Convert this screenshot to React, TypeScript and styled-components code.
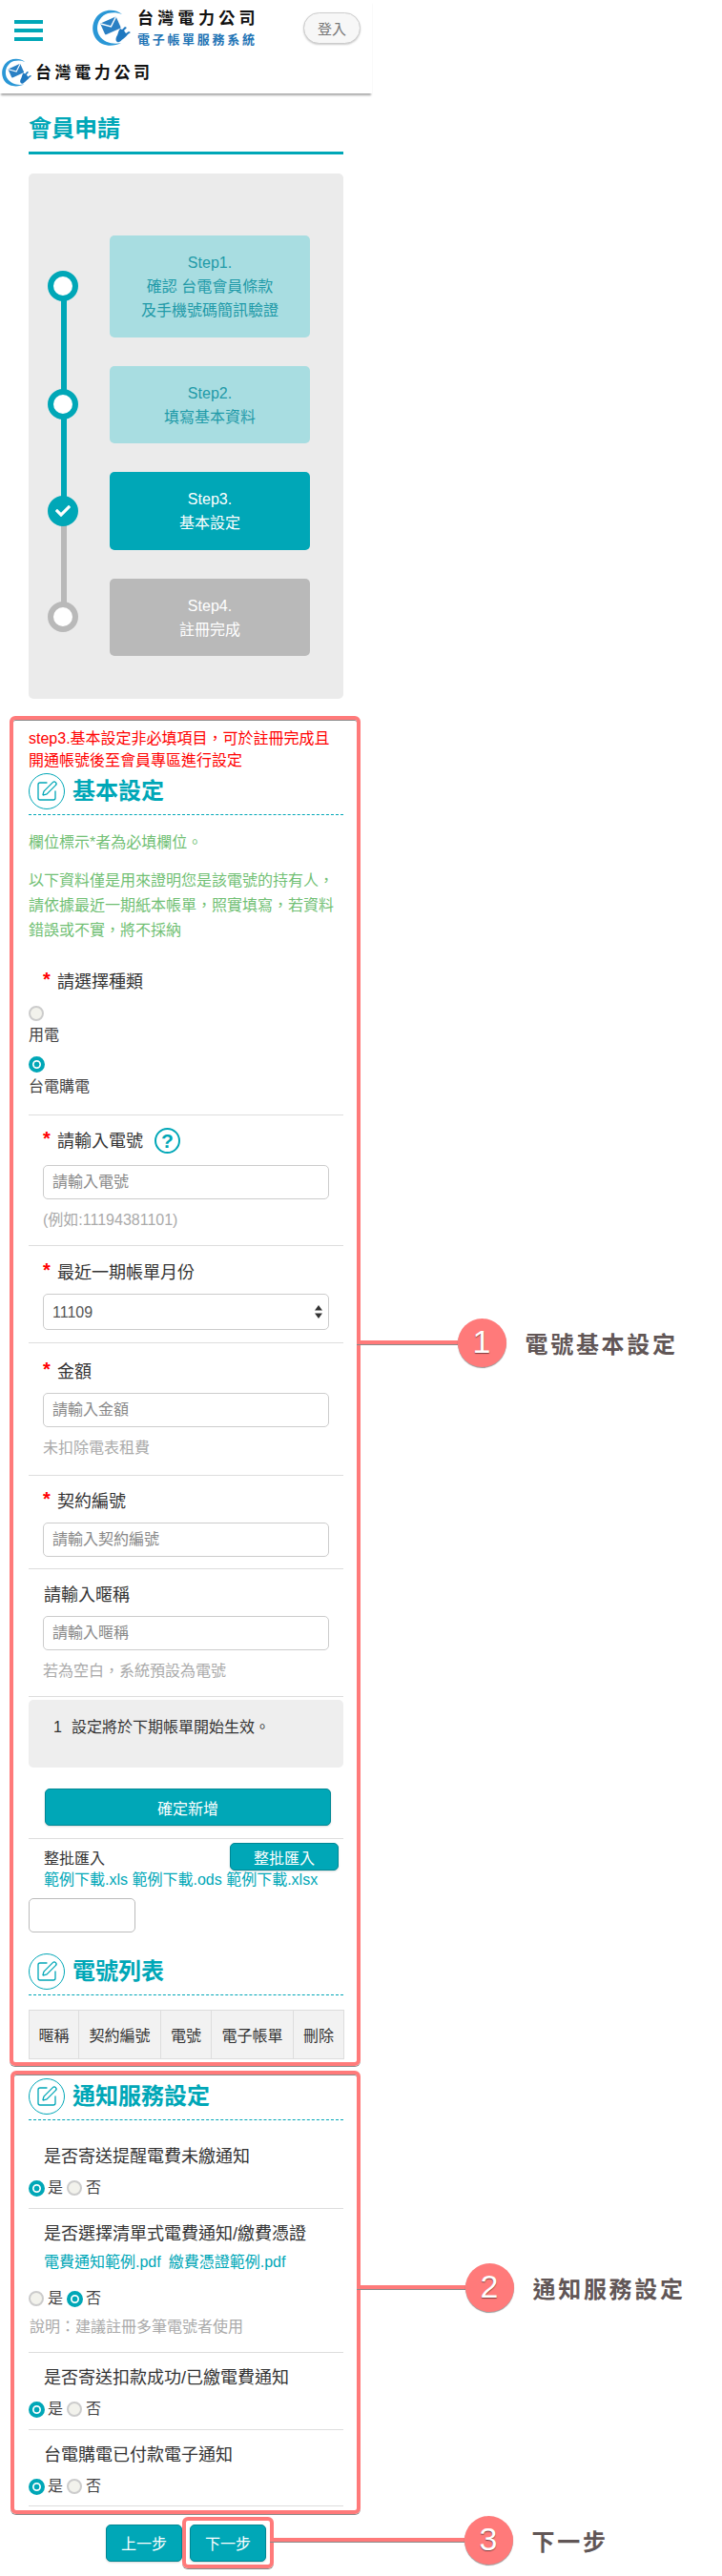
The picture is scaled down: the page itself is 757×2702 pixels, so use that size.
import React from "react";
import styled, { createGlobalStyle } from "styled-components";
import { SquarePen } from "lucide-react";
import { FaCheck } from "react-icons/fa";

const TEAL = "#00a7b7";
const MARK = "#ff7a7a";
const FONT = `"Liberation Sans", "Noto Sans CJK TC", sans-serif`;
// full-width punctuation
const COMMA = "\uFF0C";
const COLON = "\uFF1A";

const GlobalStyle = createGlobalStyle`
  html, body {
    margin: 0;
    padding: 0;
    background: #fff;
    font-family: ${FONT};
    color: #333;
  }
  * {
    box-sizing: border-box;
  }
`;

const Page = styled.div`
  width: 390px;
  padding-bottom: 10px;
`;

const Header = styled.header`
  height: 98px;
  background: #fff;
  box-shadow: 0 3px 2px -1px rgba(0, 0, 0, 0.35);
`;

const TopBar = styled.div`
  display: flex;
  align-items: flex-start;
  height: 58px;
  padding: 0 12px 0 15px;
`;

const Hamburger = styled.div`
  display: flex;
  flex-direction: column;
  gap: 5px;
  width: 30px;
  margin-top: 21px;

  span {
    display: block;
    height: 4px;
    background: ${TEAL};
  }
`;

const BrandLink = styled.div`
  display: flex;
  margin: 10px 0 0 52px;
`;

const BrandText = styled.div`
  margin-left: 6px;
  white-space: nowrap;
`;

const BrandName = styled.div`
  font-size: 17px;
  line-height: 20px;
  font-weight: 700;
  letter-spacing: 4.3px;
  color: #111;
`;

const BrandSub = styled.div`
  margin-top: 5px;
  font-size: 13px;
  line-height: 14px;
  font-weight: 700;
  letter-spacing: 2.7px;
  color: #1f74b5;
`;

const LoginButton = styled.button`
  width: 60px;
  height: 33px;
  margin: 13px 0 0 auto;
  padding: 0;
  border: 1px solid #ccc;
  border-radius: 17px;
  background: #f7f7f7;
  box-shadow: 0 1px 2px rgba(0, 0, 0, 0.2);
  font-family: ${FONT};
  font-size: 15px;
  color: #777;
`;

const SubBar = styled.div`
  display: flex;
  padding: 3px 0 0 2px;
`;

const SubBrandName = styled(BrandName)`
  margin: 6px 0 0 3px;
  line-height: 20px;
  letter-spacing: 3.6px;
`;

const TopColumn = styled.div`
  margin: 0 30px;
`;

const PageTitle = styled.h1`
  margin: 0;
  padding: 17px 0 4px;
  font-size: 24px;
  line-height: 40px;
  font-weight: 700;
  color: ${TEAL};
  border-bottom: 3px solid ${TEAL};
`;

const StepPanel = styled.div`
  display: flex;
  flex-direction: column;
  gap: 30px;
  margin-top: 20px;
  padding: 65px 35px 45px 20px;
  background: #ebebeb;
  border-radius: 5px;
`;

const StepRow = styled.div<{ $up?: string; $down?: string }>`
  position: relative;
  display: flex;
  align-items: center;

  &::before,
  &::after {
    content: "";
    position: absolute;
    left: 14px;
    width: 6px;
  }
  &::before {
    top: -15px;
    bottom: 50%;
    background: ${(p) => p.$up || "transparent"};
  }
  &::after {
    top: 50%;
    bottom: -15px;
    background: ${(p) => p.$down || "transparent"};
  }
`;

const StepDot = styled.div<{ $color: string; $filled?: boolean }>`
  position: relative;
  z-index: 1;
  display: flex;
  align-items: center;
  justify-content: center;
  flex: none;
  width: 32px;
  height: 32px;
  border: 6px solid ${(p) => p.$color};
  border-radius: 50%;
  background: ${(p) => (p.$filled ? p.$color : "#fff")};
  color: #fff;
`;

const StepCard = styled.div<{ $bg: string; $fg: string }>`
  width: 210px;
  margin-left: 33px;
  padding: 16px 10px 15.5px;
  border-radius: 5px;
  background: ${(p) => p.$bg};
  color: ${(p) => p.$fg};
  font-size: 16px;
  line-height: 25px;
  text-align: center;
`;

const MarkedBox = styled.section<{ $left: number }>`
  position: relative;
  margin-left: ${(p) => p.$left}px;
  width: ${(p) => 378 - p.$left}px;
  padding: 0 14px 0 ${(p) => 30 - p.$left - 4}px;
  border: 4px solid ${MARK};
  border-radius: 6px;
  box-shadow: 0 1px 0 #8a8a8a, inset 0 1px 0 #8a8a8a;
`;

const BasicBox = styled(MarkedBox)`
  margin-top: 18px;
  padding-top: 8px;
  padding-bottom: 3px;
`;

const NoticeBox = styled(MarkedBox)`
  margin-top: 5px;
  padding-top: 4px;
  padding-bottom: 4px;
`;

const Callout = styled.div<{ $top: number }>`
  position: absolute;
  top: ${(p) => p.$top}px;
  left: 100%;
  display: flex;
  align-items: center;
  height: 51px;
  white-space: nowrap;
`;

const CalloutLine = styled.div<{ $width: number }>`
  width: ${(p) => p.$width}px;
  height: 4px;
  background: ${MARK};
  box-shadow: 0 1px 0 #8a8a8a;
`;

const CalloutBadge = styled.div`
  flex: none;
  width: 51px;
  height: 51px;
  border-radius: 50%;
  background: ${MARK};
  box-shadow: 0 1px 1px rgba(0, 0, 0, 0.4);
  color: #fff;
  font-size: 34px;
  line-height: 49px;
  text-align: center;
  text-shadow: 0 1px 1px rgba(0, 0, 0, 0.5);
`;

const CalloutText = styled.div`
  margin-left: 20px;
  font-size: 24px;
  font-weight: 700;
  letter-spacing: 2.7px;
  color: #615656;
`;

const RedNote = styled.div`
  font-size: 16px;
  line-height: 23px;
  color: #f00;
`;

const SectionHead = styled.div<{ $mt?: number }>`
  display: flex;
  align-items: center;
  margin-top: ${(p) => p.$mt || 0}px;
  padding-bottom: 5px;
  border-bottom: 1px dashed ${TEAL};
`;

const SectionIcon = styled.div`
  display: flex;
  align-items: center;
  justify-content: center;
  flex: none;
  width: 38px;
  height: 38px;
  border: 1px solid ${TEAL};
  border-radius: 50%;
  color: ${TEAL};
`;

const SectionTitle = styled.h2`
  margin: 0 0 0 8px;
  font-size: 24px;
  line-height: 38px;
  font-weight: 700;
  color: ${TEAL};
`;

const GreenNote = styled.p<{ $mt: number }>`
  margin: ${(p) => p.$mt}px 0 0;
  font-size: 16px;
  line-height: 26px;
  color: #71bf74;
`;

const FormGroup = styled.div<{ $pt: number; $pb: number }>`
  padding: ${(p) => p.$pt}px 0 ${(p) => p.$pb}px;
  border-bottom: 1px solid #ddd;
`;

const FieldLabel = styled.div`
  position: relative;
  padding-left: 16px;
  font-size: 18px;
  line-height: 26px;
  color: #333;
  white-space: nowrap;
`;

const Star = styled.span`
  position: absolute;
  top: -3px;
  left: 15px;
  font-size: 20px;
  font-weight: 700;
  color: #f00;
`;

const RequiredText = styled.span`
  margin-left: 14px;
`;

const HelpMark = styled.span`
  position: absolute;
  top: -1px;
  left: 132px;
  width: 27px;
  height: 27px;
  border: 2px solid ${TEAL};
  border-radius: 50%;
  color: ${TEAL};
  font-size: 21px;
  font-weight: 700;
  line-height: 23px;
  text-align: center;
`;

const TextInput = styled.input<{ $mt?: number }>`
  display: block;
  width: 300px;
  height: 36px;
  margin: ${(p) => (p.$mt === undefined ? 9 : p.$mt)}px 0 0 15px;
  padding: 0 9px;
  border: 1px solid #ccc;
  border-radius: 5px;
  background: #fff;
  font-family: ${FONT};
  font-size: 16px;
  color: #555;
  outline: none;

  &::placeholder {
    color: #888;
    opacity: 1;
  }
`;

const SelectWrap = styled.div`
  position: relative;
  width: 300px;
  margin: 9px 0 0 15px;
`;

const MonthSelect = styled.select`
  display: block;
  width: 100%;
  height: 38px;
  padding: 0 9px;
  border: 1px solid #ccc;
  border-radius: 5px;
  background: #fff;
  font-family: ${FONT};
  font-size: 16px;
  color: #555;
  appearance: none;
  outline: none;
`;

const SelectArrows = styled.svg`
  position: absolute;
  top: 12px;
  right: 7px;
  pointer-events: none;
`;

const Hint = styled.div`
  margin: 10px 0 0 15px;
  font-size: 16px;
  line-height: 24px;
  color: #aaa;
`;

const RadioStack = styled.div`
  margin-top: 12px;
`;

const StackedOption = styled.label`
  display: block;
  font-size: 16px;
  line-height: 24px;
  color: #444;
`;

const Radio = styled.input.attrs({ type: "radio" })`
  display: block;
  flex: none;
  width: 16px;
  height: 16px;
  margin: 0;
  border: 2px solid #ccc;
  border-radius: 50%;
  background: #f2f2ec;
  appearance: none;

  &:checked {
    width: 17px;
    height: 17px;
    border: 4px solid ${TEAL};
    background: radial-gradient(circle, ${TEAL} 0 2.6px, #fff 3.2px);
  }
`;

const StackedRadio = styled(Radio)`
  margin-bottom: 3px;
`;

const StackedGap = styled.div`
  height: 10px;
`;

const InfoBox = styled.div`
  display: flex;
  gap: 10px;
  margin-top: 3px;
  padding: 16px 26px 29px;
  border-radius: 5px;
  background: #eee;
  font-size: 16px;
  line-height: 26px;
  color: #333;
`;

const SolidButton = styled.button`
  height: 39px;
  padding: 0;
  border: 1px solid #008794;
  border-radius: 5px;
  background: ${TEAL};
  box-shadow: 0 1px 2px rgba(0, 0, 0, 0.15);
  color: #fff;
  font-family: ${FONT};
  font-size: 16px;
`;

const AddRow = styled.div`
  padding: 22px 0 13px 17px;
  border-bottom: 1px solid #ddd;
`;

const AddButton = styled(SolidButton)`
  display: block;
  width: 300px;
`;

const ImportRow = styled.div`
  display: flex;
  align-items: center;
  justify-content: space-between;
  margin-top: 4px;
  padding: 0 5px 0 16px;
  font-size: 16px;
  color: #333;
`;

const ImportButton = styled(SolidButton)`
  width: 114px;
  height: 29px;
`;

const LinkLine = styled.div<{ $mt?: number }>`
  margin-top: ${(p) => p.$mt || 0}px;
  padding-left: 16px;
  font-size: 16px;
  line-height: ${(p) => (p.$mt ? 24 : 20)}px;
  white-space: nowrap;
`;

const FileLink = styled.a<{ $ml?: number }>`
  margin-left: ${(p) => p.$ml || 0}px;
  color: ${TEAL};
  text-decoration: none;
`;

const FileBox = styled.div`
  width: 112px;
  height: 36px;
  margin-top: 9px;
  border: 1px solid #bbb;
  border-radius: 5px;
`;

const ListTable = styled.table`
  width: 330px;
  margin-top: 15px;
  border-collapse: collapse;
  table-layout: fixed;
`;

const ListHead = styled.th<{ $w: number }>`
  width: ${(p) => p.$w}px;
  height: 51px;
  padding: 0;
  border: 1px solid #ddd;
  background: #f2f2f2;
  font-size: 16px;
  font-weight: 400;
  color: #333;
  white-space: nowrap;
`;

const RadioRow = styled.div<{ $mt?: number }>`
  display: flex;
  align-items: center;
  margin-top: ${(p) => (p.$mt === undefined ? 8 : p.$mt)}px;
  font-size: 16px;
  line-height: 24px;
  color: #444;
`;

const RadioOption = styled.label`
  display: flex;
  align-items: center;
  margin-right: 4px;

  input {
    margin-right: 4px;
  }
  input:checked {
    margin-right: 3px;
  }
`;

const NoteHint = styled(Hint)`
  margin: 6px 0 0 1px;
`;

const NavRow = styled.div`
  display: flex;
  align-items: center;
  margin: 3px 0 0 111px;
`;

const NavButton = styled(SolidButton)`
  width: 80px;
`;

const NextMark = styled.div`
  position: relative;
  padding: 3.5px 4px;
  border: 4px solid ${MARK};
  border-radius: 6px;
  box-shadow: 0 1px 0 #8a8a8a;
`;

const LogoMark = ({ size }: { size: number }) => (
  <svg width={size} height={(size * 38) / 41} viewBox="0 0 41 38" style={{ flex: "none" }}>
    <path
      d="M31 5C24-1 11-1 4 8-3 18 0 31 10 36c7 3 14 2 20-1-8 2-18 0-23-8C2 18 7 7 16 4c5-1 10-1 15 1Z"
      fill="#2a97d6"
    />
    <g transform="rotate(-24 19 17)">
      <rect x="10" y="10.5" width="18" height="13" rx="1" fill="#2a80c4" />
      <path d="M10.5 11 19 18l8.5-7" fill="none" stroke="#fff" strokeWidth="1.4" />
    </g>
    <path
      d="M26 27c-2 3-2 6 0 7 3 1 4-2 6-3 2-2 4-3 5-5l3-2-2-1-3 2-2-3 3-3-2-1-3 3-2-1c-2 2-2 5-3 7Z"
      fill="#1f78c0"
    />
  </svg>
);

const EditIcon = () => (
  <SectionIcon>
    <SquarePen size={24} strokeWidth={1.3} />
  </SectionIcon>
);

export default function App() {
  return (
    <>
      <GlobalStyle />
      <Page>
        <Header>
          <TopBar>
            <Hamburger>
              <span />
              <span />
              <span />
            </Hamburger>
            <BrandLink>
              <LogoMark size={41} />
              <BrandText>
                <BrandName>台灣電力公司</BrandName>
                <BrandSub>電子帳單服務系統</BrandSub>
              </BrandText>
            </BrandLink>
            <LoginButton>登入</LoginButton>
          </TopBar>
          <SubBar>
            <LogoMark size={32} />
            <SubBrandName>台灣電力公司</SubBrandName>
          </SubBar>
        </Header>

        <TopColumn>
          <PageTitle>會員申請</PageTitle>
          <StepPanel>
            <StepRow $down={TEAL}>
              <StepDot $color={TEAL} />
              <StepCard $bg="#a8dde1" $fg="#1f9aa8">
                Step1.
                <br />
                確認 台電會員條款
                <br />
                及手機號碼簡訊驗證
              </StepCard>
            </StepRow>
            <StepRow $up={TEAL} $down={TEAL}>
              <StepDot $color={TEAL} />
              <StepCard $bg="#a8dde1" $fg="#1f9aa8">
                Step2.
                <br />
                填寫基本資料
              </StepCard>
            </StepRow>
            <StepRow $up={TEAL} $down="#b9b9b9">
              <StepDot $color={TEAL} $filled>
                <FaCheck size={16} />
              </StepDot>
              <StepCard $bg={TEAL} $fg="#fff">
                Step3.
                <br />
                基本設定
              </StepCard>
            </StepRow>
            <StepRow $up="#b9b9b9">
              <StepDot $color="#b9b9b9" />
              <StepCard $bg="#b9b9b9" $fg="#fff">
                Step4.
                <br />
                註冊完成
              </StepCard>
            </StepRow>
          </StepPanel>
        </TopColumn>

        <BasicBox $left={10}>
          <Callout $top={627.5}>
            <CalloutLine $width={105.5} />
            <CalloutBadge>1</CalloutBadge>
            <CalloutText>電號基本設定</CalloutText>
          </Callout>

          <RedNote>
            step3.基本設定非必填項目{COMMA}可於註冊完成且
            <br />
            開通帳號後至會員專區進行設定
          </RedNote>
          <SectionHead $mt={2}>
            <EditIcon />
            <SectionTitle>基本設定</SectionTitle>
          </SectionHead>
          <GreenNote $mt={16}>欄位標示*者為必填欄位。</GreenNote>
          <GreenNote $mt={14}>
            以下資料僅是用來證明您是該電號的持有人{COMMA}
            <br />
            請依據最近一期紙本帳單{COMMA}照實填寫{COMMA}若資料
            <br />
            錯誤或不實{COMMA}將不採納
          </GreenNote>

          <FormGroup $pt={28} $pb={17}>
            <FieldLabel>
              <Star>*</Star>
              <RequiredText>請選擇種類</RequiredText>
            </FieldLabel>
            <RadioStack>
              <StackedOption>
                <StackedRadio name="kind" />
                用電
              </StackedOption>
              <StackedGap />
              <StackedOption>
                <StackedRadio name="kind" defaultChecked />
                台電購電
              </StackedOption>
            </RadioStack>
          </FormGroup>

          <FormGroup $pt={14} $pb={14}>
            <FieldLabel>
              <Star>*</Star>
              <RequiredText>請輸入電號</RequiredText>
              <HelpMark>?</HelpMark>
            </FieldLabel>
            <TextInput $mt={12} placeholder="請輸入電號" />
            <Hint>(例如:11194381101)</Hint>
          </FormGroup>

          <FormGroup $pt={15} $pb={13}>
            <FieldLabel>
              <Star>*</Star>
              <RequiredText>最近一期帳單月份</RequiredText>
            </FieldLabel>
            <SelectWrap>
              <MonthSelect defaultValue="11109">
                <option value="11109">11109</option>
                <option value="11108">11108</option>
              </MonthSelect>
              <SelectArrows width="8" height="14" viewBox="0 0 8 14">
                <path d="M4 0 8 5.5H0Z M4 14 0 8.5H8Z" fill="#333" />
              </SelectArrows>
            </SelectWrap>
          </FormGroup>

          <FormGroup $pt={17} $pb={16}>
            <FieldLabel>
              <Star>*</Star>
              <RequiredText>金額</RequiredText>
            </FieldLabel>
            <TextInput placeholder="請輸入金額" />
            <Hint>未扣除電表租費</Hint>
          </FormGroup>

          <FormGroup $pt={14} $pb={12}>
            <FieldLabel>
              <Star>*</Star>
              <RequiredText>契約編號</RequiredText>
            </FieldLabel>
            <TextInput placeholder="請輸入契約編號" />
          </FormGroup>

          <FormGroup $pt={14} $pb={14}>
            <FieldLabel>請輸入暱稱</FieldLabel>
            <TextInput placeholder="請輸入暱稱" />
            <Hint>若為空白{COMMA}系統預設為電號</Hint>
          </FormGroup>

          <InfoBox>
            <span>1</span>
            <span>設定將於下期帳單開始生效。</span>
          </InfoBox>

          <AddRow>
            <AddButton>確定新增</AddButton>
          </AddRow>

          <ImportRow>
            <span>整批匯入</span>
            <ImportButton>整批匯入</ImportButton>
          </ImportRow>
          <LinkLine>
            <FileLink href="#">範例下載.xls</FileLink> <FileLink href="#">範例下載.ods</FileLink>{" "}
            <FileLink href="#">範例下載.xlsx</FileLink>
          </LinkLine>
          <FileBox />

          <SectionHead $mt={22}>
            <EditIcon />
            <SectionTitle>電號列表</SectionTitle>
          </SectionHead>
          <ListTable>
            <thead>
              <tr>
                <ListHead $w={52}>暱稱</ListHead>
                <ListHead $w={86}>契約編號</ListHead>
                <ListHead $w={53}>電號</ListHead>
                <ListHead $w={86}>電子帳單</ListHead>
                <ListHead $w={53}>刪除</ListHead>
              </tr>
            </thead>
          </ListTable>
        </BasicBox>

        <NoticeBox $left={11}>
          <Callout $top={197.5}>
            <CalloutLine $width={113.5} />
            <CalloutBadge>2</CalloutBadge>
            <CalloutText>通知服務設定</CalloutText>
          </Callout>

          <SectionHead>
            <EditIcon />
            <SectionTitle>通知服務設定</SectionTitle>
          </SectionHead>

          <FormGroup $pt={25} $pb={9}>
            <FieldLabel>是否寄送提醒電費未繳通知</FieldLabel>
            <RadioRow>
              <RadioOption>
                <Radio name="unpaid" defaultChecked />是
              </RadioOption>
              <RadioOption>
                <Radio name="unpaid" />否
              </RadioOption>
            </RadioRow>
          </FormGroup>

          <FormGroup $pt={13} $pb={14}>
            <FieldLabel>是否選擇清單式電費通知/繳費憑證</FieldLabel>
            <LinkLine $mt={5}>
              <FileLink href="#">電費通知範例.pdf</FileLink>
              <FileLink href="#" $ml={8}>
                繳費憑證範例.pdf
              </FileLink>
            </LinkLine>
            <RadioRow $mt={14}>
              <RadioOption>
                <Radio name="list" />是
              </RadioOption>
              <RadioOption>
                <Radio name="list" defaultChecked />否
              </RadioOption>
            </RadioRow>
            <NoteHint>說明{COLON}建議註冊多筆電號者使用</NoteHint>
          </FormGroup>

          <FormGroup $pt={13} $pb={9}>
            <FieldLabel>是否寄送扣款成功/已繳電費通知</FieldLabel>
            <RadioRow>
              <RadioOption>
                <Radio name="paid" defaultChecked />是
              </RadioOption>
              <RadioOption>
                <Radio name="paid" />否
              </RadioOption>
            </RadioRow>
          </FormGroup>

          <FormGroup $pt={13} $pb={8}>
            <FieldLabel>台電購電已付款電子通知</FieldLabel>
            <RadioRow>
              <RadioOption>
                <Radio name="bought" defaultChecked />是
              </RadioOption>
              <RadioOption>
                <Radio name="bought" />否
              </RadioOption>
            </RadioRow>
          </FormGroup>
        </NoticeBox>

        <NavRow>
          <NavButton>上一步</NavButton>
          <NextMark>
            <Callout $top={-5.5}>
              <CalloutLine $width={203.5} />
              <CalloutBadge>3</CalloutBadge>
              <CalloutText>下一步</CalloutText>
            </Callout>
            <NavButton>下一步</NavButton>
          </NextMark>
        </NavRow>
      </Page>
    </>
  );
}
